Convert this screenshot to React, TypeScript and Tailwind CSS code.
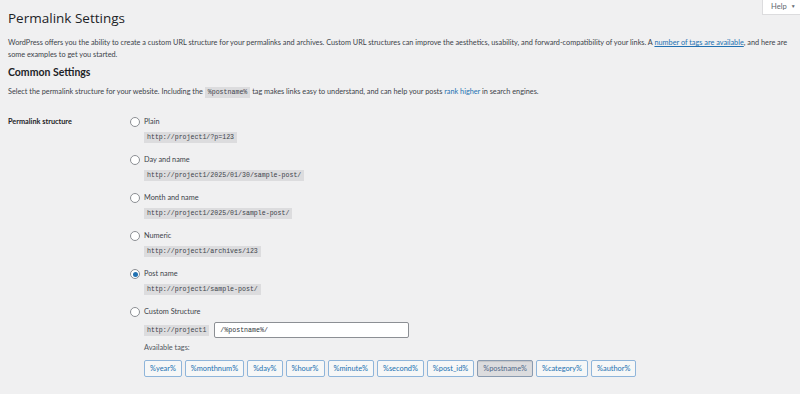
import React from "react";

const OPTIONS = [
  { label: "Plain", url: "http://project1/?p=123" },
  { label: "Day and name", url: "http://project1/2025/01/30/sample-post/" },
  { label: "Month and name", url: "http://project1/2025/01/sample-post/" },
  { label: "Numeric", url: "http://project1/archives/123" },
  { label: "Post name", url: "http://project1/sample-post/", checked: true },
];

const TAGS = [
  "%year%",
  "%monthnum%",
  "%day%",
  "%hour%",
  "%minute%",
  "%second%",
  "%post_id%",
  "%postname%",
  "%category%",
  "%author%",
];

function Radio({ checked }: { checked?: boolean }) {
  return (
    <span className="flex h-[10px] w-[10px] shrink-0 items-center justify-center rounded-full border border-[#8c8f94] bg-white">
      {checked && <span className="h-[5px] w-[5px] rounded-full bg-[#2271b1]" />}
    </span>
  );
}

function Code({ children }: { children: React.ReactNode }) {
  return (
    <code className="inline-block bg-[#dcdcde] px-[3px] font-['Liberation_Mono',monospace] text-[6.6px] leading-[11px] text-[#3c434a]">
      {children}
    </code>
  );
}

export default function App() {
  return (
    <div className="relative h-[394px] overflow-hidden bg-[#f0f0f1] font-['Lato',sans-serif] text-[7.3px] text-[#3c434a]">
      <button className="absolute right-0 top-0 flex h-[15px] w-[38px] items-center gap-[4px] border-b border-l border-[#dcdcde] bg-white pl-[8px] text-[7.6px] text-[#646970]">
        Help <span className="text-[5px]">▼</span>
      </button>

      <div className="px-2">
        <h1 className="pt-[8px] font-['Open_Sans',sans-serif] text-[13.5px] font-normal leading-[20px] text-[#1d2327]">
          Permalink Settings
        </h1>

        <p className="mt-[9px] leading-[11.5px]">
          WordPress offers you the ability to create a custom URL structure for your permalinks and archives. Custom URL
          structures can improve the aesthetics, usability, and forward-compatibility of your links. A{" "}
          <a className="text-[#2271b1] underline">number of tags are available</a>, and here are some examples to get you
          started.
        </p>

        <h2 className="mt-[5px] text-[10.5px] font-bold leading-[14px] text-[#1d2327]">Common Settings</h2>

        <p className="mt-[7px] leading-[11.5px]">
          Select the permalink structure for your website. Including the <Code>%postname%</Code> tag makes links easy to
          understand, and can help your posts <span className="text-[#2271b1]">rank higher</span> in search engines.
        </p>

        <div className="mt-[18px] flex">
          <div className="w-[122px] font-bold leading-[12px] text-[#1d2327]">Permalink structure</div>

          <div className="flex flex-col">
            {OPTIONS.map((o) => (
              <div key={o.label} className="mb-[11px]">
                <label className="flex items-center gap-[4px] leading-[12px]">
                  <Radio checked={o.checked} />
                  {o.label}
                </label>
                <div className="ml-[14px] mt-[4px] flex">
                  <Code>{o.url}</Code>
                </div>
              </div>
            ))}

            <div>
              <label className="flex items-center gap-[4px] leading-[12px]">
                <Radio />
                Custom Structure
              </label>
              <div className="ml-[14px] mt-[4px] flex items-center gap-[5px]">
                <Code>http://project1</Code>
                <input
                  readOnly
                  value="/%postname%/"
                  className="h-[16px] w-[195px] rounded-[2px] border border-[#8c8f94] bg-white px-[5px] font-['Liberation_Mono',monospace] text-[6.6px] text-[#2c3338] outline-none"
                />
              </div>
              <div className="ml-[14px] mt-[4px] leading-[12px] text-[#50575e]">Available tags:</div>
              <div className="ml-[14px] mt-[6px] flex gap-[3px]">
                {TAGS.map((t) => (
                  <button
                    key={t}
                    className={
                      t === "%postname%"
                        ? "h-[17px] rounded-[2px] border border-[#8a9bb0] bg-[#dcdcde] px-[5px] text-[7.4px] text-[#50698a] shadow-[inset_0_1px_1px_rgba(0,0,0,0.1)]"
                        : "h-[17px] rounded-[2px] border border-[#8fb5da] bg-[#f6f7f7] px-[5px] text-[7.4px] text-[#2271b1]"
                    }
                  >
                    {t}
                  </button>
                ))}
              </div>
            </div>
          </div>
        </div>
      </div>
    </div>
  );
}
